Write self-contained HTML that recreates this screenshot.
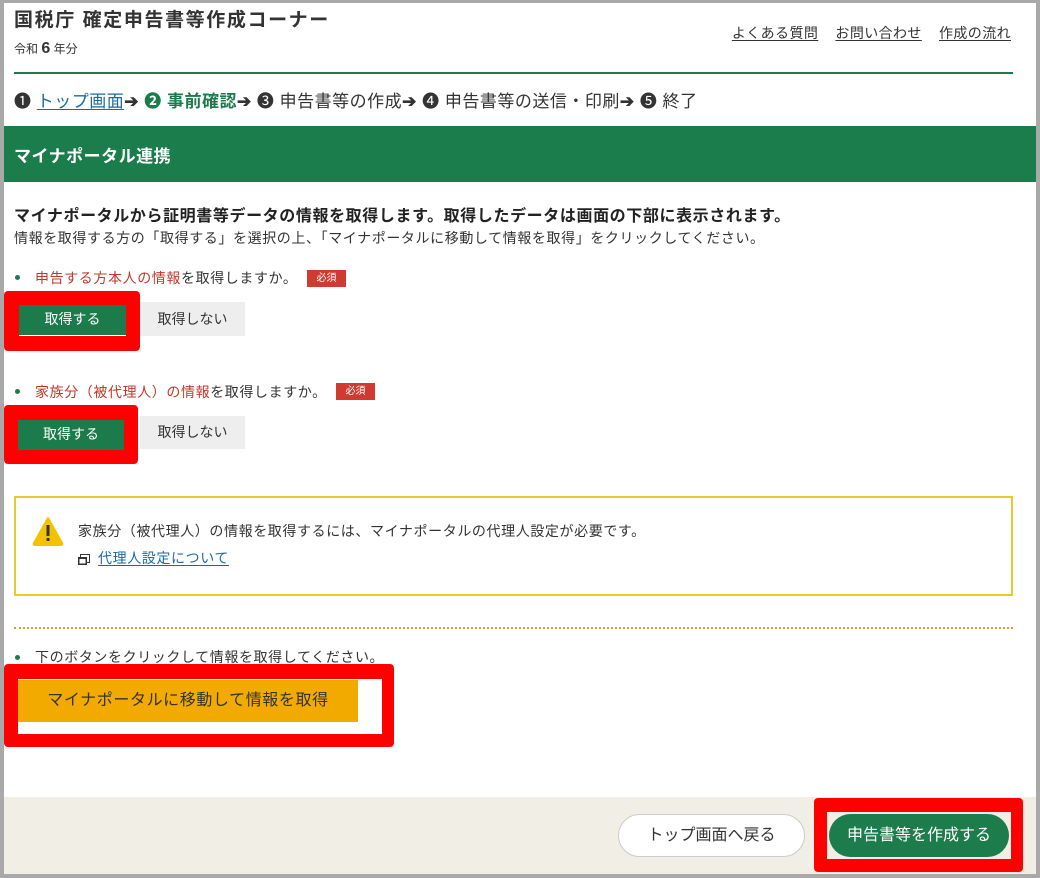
<!DOCTYPE html>
<html><head><meta charset="utf-8"><style>
*{margin:0;padding:0;box-sizing:border-box}
body{width:1040px;height:878px;background:#a9a9a9;font-family:"Liberation Sans","Noto Sans CJK JP",sans-serif;color:#333;position:relative;overflow:hidden}
.a{position:absolute;white-space:nowrap}
.panel{left:4px;top:3px;width:1032px;height:871px;background:#fff}
.red{background:#f00;border-radius:4px}
.g{background:#1c7b4b;color:#fff;font-size:14px;text-align:center}
.gr{background:#eee;color:#333;font-size:14px;text-align:center}
.dot{width:5px;height:5px;border-radius:50%;background:#1c7b4b}
.badge{background:#d13a30;color:#fff;font-size:10px;text-align:center;line-height:17px}
.rt{color:#c0392b}
.t{font-size:14px;letter-spacing:0.6px}
u{text-underline-offset:2px}
</style></head><body>
<div class="a panel"></div>
<div class="a" style="left:14px;top:5px;font-size:19px;font-weight:bold;color:#333;letter-spacing:1.6px">国税庁 確定申告書等作成コーナー</div>
<div class="a" style="left:14px;top:40px;font-size:12px">令和 <b style="font-size:16px">6</b> 年分</div>
<div class="a" style="right:29px;top:23px;font-size:14px;letter-spacing:0.4px"><u>よくある質問</u>&nbsp;&nbsp;&nbsp;&nbsp;<u>お問い合わせ</u>&nbsp;&nbsp;&nbsp;&nbsp;<u>作成の流れ</u></div>
<div class="a" style="left:14px;top:72px;width:999px;height:2px;background:#1c7b4b"></div>
<div class="a" style="left:14px;top:87px;font-size:17px;color:#333;letter-spacing:0.5px">❶ <u style="color:#1a6aa0">トップ画面</u><b>➔</b> <span style="color:#1c7b4b;font-weight:bold">❷ 事前確認</span><b>➔</b> ❸ 申告書等の作成<b>➔</b> ❹ 申告書等の送信・印刷<b>➔</b> ❺ 終了</div>
<div class="a" style="left:4px;top:126px;width:1032px;height:56px;background:#1b7d4b"></div>
<div class="a" style="left:14px;top:142px;font-size:17px;font-weight:bold;color:#fff;letter-spacing:0.5px">マイナポータル連携</div>
<div class="a" style="left:14px;top:202px;font-size:16px;font-weight:bold;color:#222;letter-spacing:0.6px">マイナポータルから証明書等データの情報を取得します。取得したデータは画面の下部に表示されます。</div>
<div class="a t" style="left:14px;top:228px">情報を取得する方の「取得する」を選択の上、「マイナポータルに移動して情報を取得」をクリックしてください。</div>

<div class="a dot" style="left:15px;top:275px"></div>
<div class="a t" style="left:35px;top:268px"><span class="rt">申告する方本人の情報</span>を取得しますか。</div>
<div class="a badge" style="left:307px;top:270px;width:39px;height:17px">必須</div>
<div class="a red" style="left:4px;top:291px;width:136px;height:60px"></div>
<div class="a g" style="left:19px;top:305px;width:107px;height:31px;line-height:29px;border-bottom:1px solid #fff">取得する</div>
<div class="a gr" style="left:140px;top:302px;width:105px;height:34px;line-height:34px">取得しない</div>

<div class="a dot" style="left:15px;top:389px"></div>
<div class="a t" style="left:35px;top:382px"><span class="rt">家族分（被代理人）の情報</span>を取得しますか。</div>
<div class="a badge" style="left:336px;top:383px;width:39px;height:17px">必須</div>
<div class="a red" style="left:4px;top:405px;width:134px;height:59px"></div>
<div class="a g" style="left:18px;top:420px;width:106px;height:30px;line-height:28px">取得する</div>
<div class="a gr" style="left:140px;top:416px;width:105px;height:33px;line-height:33px">取得しない</div>

<div class="a" style="left:14px;top:496px;width:999px;height:100px;border:2px solid #e3cc2e"></div>
<svg class="a" style="left:32px;top:516px" width="32" height="30" viewBox="0 0 32 30"><path d="M16 2 L30 27 Q31 29 29 29 L3 29 Q1 29 2 27 Z" fill="#f2c200" stroke="#f2c200" stroke-linejoin="round" stroke-width="2"/><rect x="14.5" y="9" width="3" height="11" fill="#333"/><rect x="14.5" y="22" width="3" height="3" fill="#333"/></svg>
<div class="a t" style="left:78px;top:521px">家族分（被代理人）の情報を取得するには、マイナポータルの代理人設定が必要です。</div>
<svg class="a" style="left:78px;top:554px" width="12" height="11"><rect x="2.5" y="0.5" width="9" height="8" fill="none" stroke="#333"/><rect x="0" y="3" width="9" height="8" fill="#333"/><rect x="1.5" y="5" width="6" height="4.5" fill="#fff"/></svg>
<div class="a t" style="left:98px;top:548px;color:#1a6aa0"><u>代理人設定について</u></div>

<div class="a" style="left:14px;top:627px;width:999px;border-top:2px dotted #c9a23a"></div>
<div class="a dot" style="left:15px;top:655px"></div>
<div class="a t" style="left:35px;top:647px">下のボタンをクリックして情報を取得してください。</div>
<div class="a red" style="left:4px;top:664px;width:390px;height:83px"></div>
<div class="a" style="left:18px;top:679px;width:364px;height:55px;background:#fff"></div>
<div class="a" style="left:18px;top:680px;width:340px;height:42px;background:#f2aa00;color:#333;font-size:16px;text-align:center;line-height:42px;letter-spacing:0.6px">マイナポータルに移動して情報を取得</div>

<div class="a" style="left:4px;top:797px;width:1032px;height:77px;background:#f0eee5"></div>
<div class="a" style="left:618px;top:814px;width:187px;height:43px;background:#fff;border:1px solid #ccc;border-radius:22px;font-size:16px;text-align:center;line-height:41px;color:#333">トップ画面へ戻る</div>
<div class="a red" style="left:814px;top:798px;width:209px;height:74px"></div>
<div class="a" style="left:827px;top:812px;width:184px;height:47px;background:#f0eee5"></div>
<div class="a" style="left:829px;top:814px;width:180px;height:43px;background:#1d7c4c;border-radius:22px;font-size:16px;text-align:center;line-height:43px;color:#fff">申告書等を作成する</div>
</body></html>
